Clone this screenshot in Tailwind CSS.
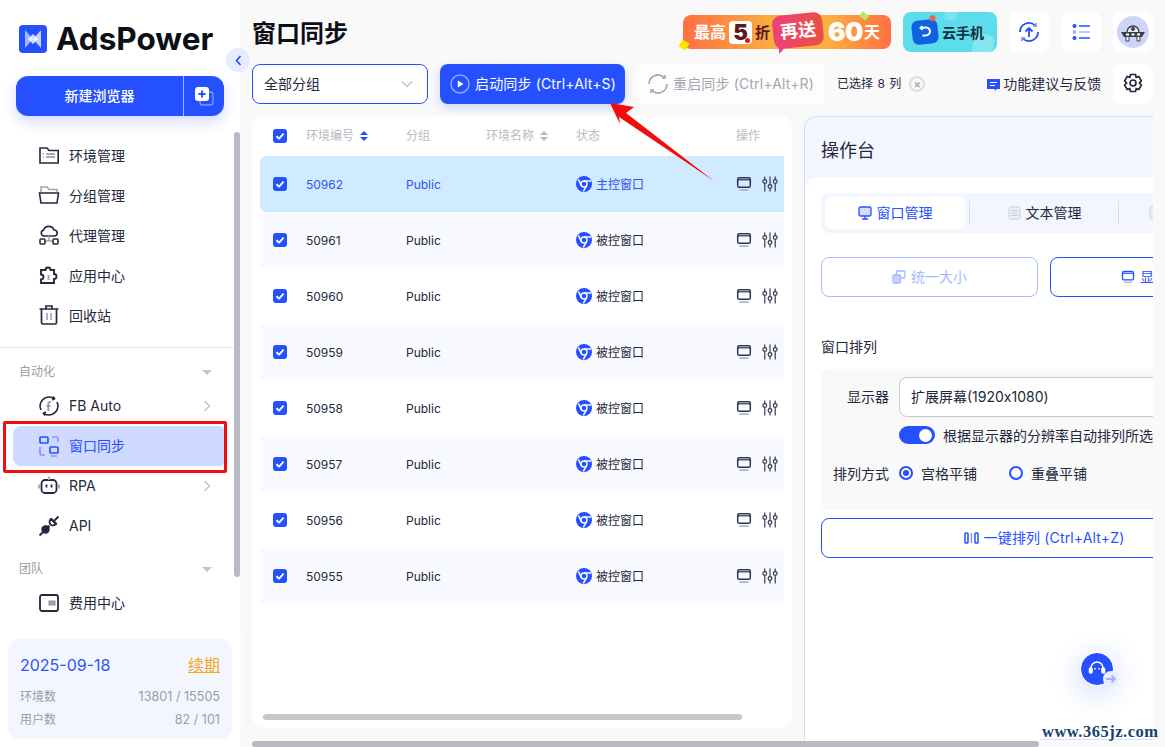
<!DOCTYPE html>
<html lang="zh-CN">
  <head>
    <meta charset="UTF-8" />
    <title>AdsPower</title>
    <script src="https://cdn.jsdelivr.net/npm/@tailwindcss/browser@4"></script>
  </head>
  <body class="relative flex w-[1165px] h-[747px] overflow-hidden bg-[#f9f9fa] text-[#23283d] text-[14px] font-['Inter','Noto_Sans_CJK_SC',sans-serif]">
    <svg class="hidden">
      <symbol id="chrome" viewBox="0 0 24 24">
        <circle cx="12" cy="12" r="12" fill="#2450ff" />
        <circle cx="12" cy="12" r="4.500" fill="none" stroke="#fff" stroke-width="2" />
        <path d="M22.500 7.500H12M3.500 5 8.300 14.800M11 23l5.200-9" stroke="#fff" stroke-width="2.200" fill="none" />
      </symbol>
      <symbol id="win" viewBox="0 0 16 16">
        <rect x="1.700" y="1.700" width="12.600" height="9.600" rx="1.600" fill="none" stroke="#2d3350" stroke-width="1.500" />
        <path d="M2 3.800h12" stroke="#2d3350" stroke-width="1.200" />
        <path d="M3.500 14h9" stroke="#a9aec2" stroke-width="1.600" />
      </symbol>
      <symbol id="sliders" viewBox="0 0 16 16">
        <g fill="none" stroke="#2d3350" stroke-width="1.150">
          <circle cx="2.800" cy="5.500" r="1.900" /><circle cx="8" cy="10.500" r="1.900" /><circle cx="13.200" cy="5.500" r="1.900" />
          <path d="M2.800 .5v3M2.800 7.400V15.500M8 .5v8M8 12.400v3.100M13.200 .5v3M13.200 7.400V15.500" />
        </g>
      </symbol>
      <symbol id="check" viewBox="0 0 14 14">
        <rect width="14" height="14" rx="3" fill="#2450ff" />
        <path d="M3.400 7.200 6 9.600l4.600-5" fill="none" stroke="#fff" stroke-width="1.900" />
      </symbol>
      <symbol id="chev" viewBox="0 0 8 12">
        <path d="M1.500 1 6.500 6l-5 5" fill="none" stroke="#c3c5cc" stroke-width="1.500" />
      </symbol>
      <symbol id="sort" viewBox="0 0 8 10">
        <path d="M4 0 8 4H0zM4 10 0 6h8z" />
      </symbol>
    </svg>

    <!-- 侧边栏 -->
    <aside class="relative flex flex-col w-[240px] h-full shrink-0 bg-white">
      <div class="flex items-center h-[76px] pl-[19px] pt-[1px] gap-[9px]">
        <svg class="w-[28px] h-[28px]" viewBox="0 0 28 28">
          <rect width="28" height="28" rx="4" fill="#2450ff" />
          <path d="M6 5l8 9-8 9z" fill="#9db4ff" />
          <path d="M22 5l-8 9 8 9z" fill="#c4d2ff" />
          <path d="M14 9l5 5-5 5-5-5z" fill="#fff" opacity=".8" />
        </svg>
        <span class="text-[31.500px] leading-none font-bold text-[#0d0f16]">AdsPower</span>
      </div>
      <div class="flex mx-[16px] h-[40px] rounded-xl bg-[#2450ff] text-white text-[14px] font-medium shadow-[0_6px_14px_rgba(36,80,255,0.2)]">
        <div class="flex items-center justify-center w-[168px] pb-[2px] border-r border-white/60">新建浏览器</div>
        <div class="flex flex-1 items-center justify-center">
          <svg class="w-[20px] h-[20px]" viewBox="0 0 20 20">
            <rect x="6" y="6" width="13" height="13" rx="2.500" fill="none" stroke="#7f9bff" stroke-width="1.300" />
            <rect x="1" y="1" width="14" height="14" rx="3" fill="#fff" />
            <path d="M8 4.500v7M4.500 8h7" stroke="#2450ff" stroke-width="1.900" />
          </svg>
        </div>
      </div>

      <nav class="flex flex-col mt-[19px]">
        <a class="flex items-center h-[40px] pl-[38px] gap-[9px]">
          <svg class="w-[22px] h-[22px]" viewBox="0 0 22 22" fill="none" stroke="#23283d" stroke-width="1.600"><path d="M2 4h7l2 2.500h9.200V19H2z" /><path d="M8 10h9M8 13h9M5 10h1M5 13h1" stroke="#8b8fa3" /></svg>
          <span>环境管理</span>
        </a>
        <a class="flex items-center h-[40px] pl-[38px] gap-[9px]">
          <svg class="w-[22px] h-[22px]" viewBox="0 0 22 22" fill="none" stroke-width="1.600"><path d="M3 8V3h6l2 2.500h8V8" stroke="#a4a7b5" /><path d="M1.500 9h19l-1.500 10H3z" stroke="#23283d" /></svg>
          <span>分组管理</span>
        </a>
        <a class="flex items-center h-[40px] pl-[38px] gap-[9px]">
          <svg class="w-[22px] h-[22px]" viewBox="0 0 22 22" fill="none" stroke="#23283d" stroke-width="1.600"><path d="M6 12a3 3 0 0 1-.4-5.900A5.500 5.500 0 0 1 16 6a3 3 0 0 1 .2 6z" /><path d="M11 12v5M7 17h8" stroke="#a4a7b5" /><rect x="2" y="15" width="5" height="5" rx="1" /><rect x="15" y="15" width="5" height="5" rx="1" /></svg>
          <span>代理管理</span>
        </a>
        <a class="flex items-center h-[40px] pl-[38px] gap-[9px]">
          <svg class="w-[22px] h-[22px]" viewBox="0 0 22 22" fill="none" stroke="#23283d" stroke-width="1.900"><path d="M3 6h4.500a2.500 2.500 0 1 1 5 0H16v4a2.500 2.500 0 1 1 0 5v4H3v-3.500a2.500 2.500 0 1 0 0-5z" /><path d="M10.500 11v5" stroke="#a4a7b5" /></svg>
          <span>应用中心</span>
        </a>
        <a class="flex items-center h-[40px] pl-[38px] gap-[9px]">
          <svg class="w-[22px] h-[22px]" viewBox="0 0 22 22" fill="none" stroke="#23283d" stroke-width="1.700"><path d="M1.500 5h19M8 4.500V2h6v2.500M3.500 5v13.500A1.500 1.500 0 0 0 5 20h12a1.500 1.500 0 0 0 1.500-1.500V5" /><path d="M9 9v7M13 9v7" stroke="#a4a7b5" /></svg>
          <span>回收站</span>
        </a>
      </nav>

      <div class="mt-[12px] h-px bg-[#e8e9ee]"></div>

      <div class="flex items-center justify-between h-[48px] pl-[19px] pr-[28px] text-[12px] text-[#9a9ca6]">
        <span>自动化</span>
        <span class="w-0 h-0 border-x-[5px] border-t-[5px] border-x-transparent border-t-[#c3c5cc]"></span>
      </div>
      <nav class="flex flex-col -mt-[10px]">
        <a class="flex items-center h-[40px] pl-[38px] pr-[29px] gap-[9px]">
          <svg class="w-[22px] h-[22px]" viewBox="0 0 22 22" fill="none" stroke="#23283d" stroke-width="1.700"><path d="M3 15A9 9 0 0 1 16 3.500M19 7a9 9 0 0 1-13 11.500" /><path d="M15 1.500l1.500 2.300-2.300 1.200M7 20.500l-1.500-2.300 2.300-1.200" /><path d="M13 7h-1.200a1.500 1.500 0 0 0-1.500 1.500V16M8.500 11h4" stroke="#8b8fa3" /></svg>
          <span class="flex-1 pb-[2px]">FB Auto</span>
          <svg class="w-[8px] h-[12px]"><use href="#chev" /></svg>
        </a>
        <a class="flex items-center h-[40px] mx-[13px] pl-[25px] gap-[9px] rounded-lg bg-[#d0d9fe] text-[#2450ff]">
          <svg class="w-[22px] h-[22px]" viewBox="0 0 22 22" fill="none" stroke="#2450ff" stroke-width="1.700"><rect x="2" y="2" width="8" height="6" rx="1" /><rect x="12" y="12" width="8" height="6" rx="1" /><path d="M14 2h4a2 2 0 0 1 2 2v3M2 12v6a2 2 0 0 0 2 2h3M13 21h6" stroke="#7f9bff" /></svg>
          <span class="pb-[2px]">窗口同步</span>
        </a>
        <a class="flex items-center h-[40px] pl-[38px] pr-[29px] gap-[9px]">
          <svg class="w-[22px] h-[22px]" viewBox="0 0 22 22" fill="none" stroke="#23283d" stroke-width="1.800"><rect x="3.500" y="5" width="15" height="13" rx="3.500" /><path d="M8.500 9.500v3M13.500 9.500v3" /><path d="M11 1.500V5M1 9.500v4M21 9.500v4" stroke="#a4a7b5" /></svg>
          <span class="flex-1 pb-[2px]">RPA</span>
          <svg class="w-[8px] h-[12px]"><use href="#chev" /></svg>
        </a>
        <a class="flex items-center h-[40px] pl-[38px] gap-[9px]">
          <svg class="w-[22px] h-[22px]" viewBox="0 0 22 22" fill="none" stroke="#23283d" stroke-width="1.800"><path d="M1.500 20.500l4-4M16.500 5.500l4-4M13 3.500l5.500 5.500" /><circle cx="7.500" cy="14.500" r="3.300" fill="#23283d" /><path d="M13 4a4.500 4.500 0 0 0-1 5l1 1a4.500 4.500 0 0 0 5-1z" /><path d="M9.500 10.500l2 2" /></svg>
          <span class="pb-[2px]">API</span>
        </a>
      </nav>
      <div class="flex items-center justify-between h-[46px] pl-[19px] pr-[28px] text-[12px] text-[#9a9ca6]">
        <span>团队</span>
        <span class="w-0 h-0 border-x-[5px] border-t-[5px] border-x-transparent border-t-[#c3c5cc]"></span>
      </div>
      <a class="flex items-center h-[30px] pl-[38px] -mt-[4px] gap-[9px]">
        <svg class="w-[22px] h-[22px]" viewBox="0 0 22 22" fill="none" stroke="#23283d" stroke-width="1.800"><rect x="2" y="3" width="18" height="16" rx="2" /><rect x="11" y="9" width="6" height="4" fill="#a4a7b5" stroke="#8b8fa3" stroke-width="1" /></svg>
        <span class="pb-[2px]">费用中心</span>
      </a>

      <div class="absolute left-0 bottom-0 w-[240px] h-[116px] pt-[8px] px-[8px] bg-white shadow-[0_-8px_10px_rgba(255,255,255,0.9)]">
        <div class="h-[100px] px-[12px] pt-[15px] rounded-xl bg-[#f3f6ff] text-[12px] text-[#9a9ca6]">
          <div class="flex justify-between items-center h-[22px] text-[16px]">
            <span class="text-[#2f55f5]">2025-09-18</span>
            <span class="underline text-[#f5a623]">续期</span>
          </div>
          <div class="flex justify-between mt-[12px]"><span>环境数</span><span class="text-[12.600px]">13801 / 15505</span></div>
          <div class="flex justify-between mt-[4px]"><span>用户数</span><span class="text-[12.600px]">82 / 101</span></div>
        </div>
      </div>

      <!-- 侧边栏滚动条、折叠按钮、红框 -->
      <div class="absolute left-[234px] top-[132px] w-[6px] h-[445px] rounded-full bg-[#b9bac3]"></div>
      <div class="absolute left-[226px] top-[48px] flex items-center justify-center w-[24px] h-[24px] rounded-full bg-[#e6ebff] z-10">
        <svg class="w-[7px] h-[11px]" viewBox="0 0 7 11"><path d="M5.500 1 1.500 5.500l4 4.500" fill="none" stroke="#2450ff" stroke-width="1.600" /></svg>
      </div>
      <div class="absolute left-[3px] top-[421px] w-[224px] h-[52px] border-[3px] border-[#f00f0f] rounded-[2px]"></div>
    </aside>

    <!-- 主体 -->
    <main class="flex flex-col flex-1 min-w-0 pl-[12px] pr-[12px]">
      <header class="flex items-center h-[64px]">
        <h1 class="flex-1 text-[24px] leading-none font-bold text-[#0d0f16] mt-[3px]">窗口同步</h1>
        <div class="relative flex items-center w-[208px] h-[34px] rounded-lg bg-[linear-gradient(90deg,#ff7043,#f9b03f_45%,#fbb040_70%,#ff6f42)] text-white font-bold pl-[11px] mr-[12px]">
          <span class="text-[16px] leading-none">最高</span>
          <span class="relative flex items-center justify-center w-[23px] h-[23px] ml-[3px] rounded bg-white text-[#5a1b1b] text-[22px] leading-none font-black">5<span class="absolute right-[2px] bottom-[1px] w-[5px] h-[5px] rounded-full bg-[#f00f0f]"></span></span>
          <span class="ml-[3px] text-[15px] leading-none text-[#5a1b1b]">折</span>
          <span class="relative flex items-center justify-center w-[50px] h-[33px] ml-[3px] -mt-[4px] rounded-lg bg-[linear-gradient(100deg,#ee3f7a,#ea5040)] text-[18px] leading-none -rotate-6">再送<span class="absolute left-[4px] -bottom-[5px] w-0 h-0 border-r-[8px] border-b-[8px] border-r-transparent border-b-[#ee3f7a] -scale-y-100"></span></span>
          <span class="ml-[5px] text-[26px] leading-none font-black tracking-[-0.5px]">60</span>
          <span class="ml-[1px] text-[16px] leading-none">天</span>
          <span class="absolute -left-[3px] bottom-[0px] w-[8px] h-[8px] bg-[#ffe600] rotate-[30deg]"></span>
          <span class="absolute left-[177px] -top-[2px] w-[8px] h-[6px] bg-[#b5ea5c] rotate-[40deg]"></span>
        </div>
        <div class="relative flex items-center gap-[4px] w-[94px] h-[40px] pl-[9px] rounded-lg overflow-hidden bg-[#5ddcec] text-[14px] font-bold text-[#12303d]">
          <span class="absolute left-[42px] -top-[6px] w-[12px] h-[14px] rounded-sm bg-white/20 rotate-12"></span>
          <span class="absolute left-[70px] top-[22px] w-[20px] h-[24px] rounded-md bg-white/25 rotate-12"></span>
          <span class="relative flex items-center justify-center w-[26px] h-[24px] rounded-md bg-[#0f62e0] -rotate-6">
            <svg class="w-[14px] h-[14px]" viewBox="0 0 14 14" fill="none" stroke="#fff" stroke-width="2"><path d="M3 2.500h5a4 4 0 0 1 0 8H4M5 1 3 2.500 5 4.500" /></svg>
            <span class="absolute -top-[4px] right-[1px] w-[6px] h-[6px] rounded-full bg-[#f5604a]"></span>
          </span>
          <span class="relative">云手机</span>
        </div>
        <div class="flex items-center justify-center w-[40px] h-[40px] ml-[12px] rounded-lg bg-white">
          <svg class="w-[22px] h-[22px]" viewBox="0 0 22 22" fill="none" stroke="#2450ff" stroke-width="1.800"><path d="M2 11A9 9 0 0 1 17 4.300M20 11a9 9 0 0 1-15 6.700" /><path d="M15 5h3V2M7 17H4v3" stroke="#7f9bff" /><path d="M11 16V7M7.500 10.500 11 7l3.500 3.500" /></svg>
        </div>
        <div class="flex items-center justify-center w-[40px] h-[40px] ml-[12px] rounded-lg bg-white">
          <svg class="w-[18px] h-[18px]" viewBox="0 0 18 18" fill="none" stroke-width="1.600"><circle cx="2.500" cy="3" r="2" fill="#2450ff" /><circle cx="2.500" cy="9" r="2" fill="#a9b9ff" /><circle cx="2.500" cy="15" r="2" fill="#2450ff" /><path d="M7 3h11M7 15h11" stroke="#2450ff" /><path d="M7 9h11" stroke="#a9b9ff" /></svg>
        </div>
        <div class="flex items-center justify-center w-[40px] h-[40px] ml-[12px] rounded-lg bg-white">
          <span class="flex items-center justify-center w-[32px] h-[32px] rounded-full bg-[#cdd6f8]">
            <svg class="w-[26px] h-[22px]" viewBox="0 0 26 22"><path d="M7 11a6 6 0 0 1 12 0" fill="#e8ebf7" stroke="#3b3d4a" stroke-width="1.400" /><circle cx="13" cy="8" r="2" fill="#3b3d4a" /><path d="M1 11h24l-3 5H4z" fill="#3b3d4a" /><path d="M6 12.500h3v2H6zM11.500 12.500h3v2h-3zM17 12.500h3v2h-3z" fill="#fff" /><path d="M6 16v4h3v-4M17 16v4h3v-4" fill="#fff" stroke="#3b3d4a" /></svg>
          </span>
        </div>
      </header>

      <div class="flex items-center h-[40px]">
        <div class="flex items-center justify-between w-[176px] h-full pl-[11px] pr-[14px] rounded-lg border border-[#2450ff] bg-white">
          <span class="pb-[2px]">全部分组</span>
          <svg class="w-[12px] h-[8px]" viewBox="0 0 12 8"><path d="M1 1.500 6 6.500l5-5" fill="none" stroke="#c3c5cc" stroke-width="1.500" /></svg>
        </div>
        <button class="flex items-center w-[185px] h-full ml-[12px] pl-[10px] gap-[5px] rounded-lg bg-[#2450ff] text-white tracking-[0.150px] whitespace-nowrap shadow-[0_4px_10px_rgba(36,80,255,0.2)]">
          <svg class="w-[20px] h-[20px] shrink-0" viewBox="0 0 20 20"><circle cx="10" cy="10" r="9" fill="none" stroke="#8ea6ff" stroke-width="1.500" /><path d="M7.800 6.500 13.500 10l-5.700 3.500z" fill="#fff" /></svg>
          <span class="pb-[2px]">启动同步 (Ctrl+Alt+S)</span>
        </button>
        <button class="flex items-center w-[188px] h-full ml-[12px] pl-[10px] gap-[4px] rounded-lg bg-white/70 text-[#a4a6b0] tracking-[0.150px] whitespace-nowrap">
          <svg class="w-[22px] h-[22px] shrink-0" viewBox="0 0 22 22" fill="none" stroke="#a4a6b0" stroke-width="1.600"><path d="M2 11A9 9 0 0 1 17 4.300M20 11a9 9 0 0 1-15 6.700" /><path d="M15 5h3V2M7 17H4v3" /></svg>
          <span class="pb-[2px]">重启同步 (Ctrl+Alt+R)</span>
        </button>
        <span class="ml-[12px] text-[12px] [word-spacing:1px] whitespace-nowrap">已选择 8 列</span>
        <span class="flex items-center justify-center w-[16px] h-[16px] ml-[8px] rounded-full border-2 border-[#dcdde2] text-[#a9abb5] text-[11px] font-bold leading-none">×</span>
        <svg class="w-[13px] h-[13px] ml-[62px] shrink-0" viewBox="0 0 13 13"><path d="M0 1h13v10H9.500l-1 1.500L7 11H0z" fill="#2450ff" /><path d="M3 4.500h7M3 7.500h5" stroke="#fff" /></svg>
        <span class="ml-[3px] pb-[2px] whitespace-nowrap">功能建议与反馈</span>
        <div class="flex items-center justify-center w-[40px] h-[40px] ml-auto rounded-lg bg-white shrink-0">
          <svg class="w-[22px] h-[22px]" viewBox="0 0 22 22" fill="none" stroke="#23283d" stroke-width="1.700"><path d="M8.500 1.500h5l.7 2.800 2.600-.8 2.600 4.300-2 2.200 2 2.200-2.600 4.300-2.600-.8-.7 2.800h-5l-.7-2.800-2.600.8-2.600-4.300 2-2.200-2-2.200 2.600-4.300 2.600.8z" /><circle cx="11" cy="10" r="3" /></svg>
        </div>
      </div>

      <div class="flex flex-1 min-h-0 gap-[12px] mt-[12px]">
        <!-- 表格 -->
        <section class="relative w-[540px] h-[612px] shrink-0 px-[8px] rounded-xl bg-white">
          <div class="flex items-center h-[40px] text-[12px] text-[#b9bbc3]">
            <svg class="w-[14px] h-[14px] ml-[13px]"><use href="#check" /></svg>
            <span class="ml-[19px] w-[100px] flex items-center gap-[6px]">环境编号<svg class="w-[8px] h-[10px] fill-[#2450ff]"><use href="#sort" /></svg></span>
            <span class="w-[80px]">分组</span>
            <span class="w-[90px] flex items-center gap-[6px]">环境名称<svg class="w-[8px] h-[10px] fill-[#b9bbc3]"><use href="#sort" /></svg></span>
            <span class="w-[160px]">状态</span>
            <span>操作</span>
          </div>
          <div id="rows"></div>
          <div class="absolute left-[11px] top-[598px] w-[479px] h-[6px] rounded-full bg-[#c6c7cd]"></div>
        </section>

        <!-- 操作台 -->
        <section class="flex flex-col w-[349px] h-[625px] shrink-0 overflow-hidden rounded-tl-xl border-l border-t border-[#cfdcff] bg-[#f3f6ff]">
          <div class="flex items-center h-[60px] pl-[16px] pt-[7px] text-[18px] leading-none shrink-0">操作台</div>
          <div class="flex-1 pl-[16px] pt-[16px] rounded-tl-xl bg-white">
            <div class="flex items-center w-[340px] h-[40px] pl-[4px] rounded-lg bg-[#f3f6ff]">
              <div class="flex items-center justify-center gap-[5px] w-[140px] h-[32px] pb-[1px] rounded-md bg-white text-[#2450ff] shrink-0">
                <svg class="w-[14px] h-[14px]" viewBox="0 0 14 14"><rect x="1" y="1" width="12" height="9" rx="1.500" fill="#d4dcff" stroke="#2450ff" stroke-width="1.300" /><path d="M7 10v2.500M4 13h6" stroke="#2450ff" stroke-width="1.300" /></svg>
                <span>窗口管理</span>
              </div>
              <div class="w-px h-[24px] ml-[4px] bg-[#d4dcf5] shrink-0"></div>
              <div class="flex items-center justify-center gap-[5px] w-[148px] pb-[1px] pl-[1px] shrink-0">
                <svg class="w-[13px] h-[14px]" viewBox="0 0 13 14"><rect x="1" y="1" width="11" height="12" rx="1.500" fill="#eceef2" stroke="#c9ccd4" /><path d="M3.500 4.500h6M3.500 7h6M3.500 9.500h6" stroke="#c9ccd4" /></svg>
                <span>文本管理</span>
              </div>
              <div class="w-px h-[24px] bg-[#d4dcf5] shrink-0"></div>
              <svg class="w-[13px] h-[14px] ml-[30px] shrink-0" viewBox="0 0 13 14"><rect x="1" y="1" width="11" height="12" rx="1.500" fill="#eceef2" stroke="#c9ccd4" /></svg>
            </div>

            <div class="flex gap-[12px] w-[500px] mt-[24px]">
              <div class="flex items-center justify-center gap-[5px] w-[217px] h-[40px] pb-[1px] rounded-lg border border-[#a7baff] text-[#a7baff]">
                <svg class="w-[14px] h-[14px]" viewBox="0 0 14 14" fill="none" stroke="#a7baff" stroke-width="1.300"><rect x="4.500" y="1" width="8.500" height="7" rx="1" /><rect x="1" y="5" width="7.500" height="8" rx="1" fill="#c5d2ff" /></svg>
                <span>统一大小</span>
              </div>
              <div class="flex items-center justify-center gap-[5px] w-[217px] h-[40px] pb-[1px] rounded-lg border border-[#2450ff] text-[#2450ff]">
                <svg class="w-[14px] h-[14px]" viewBox="0 0 16 16"><rect x="1.700" y="1.700" width="12.600" height="9.600" rx="1.600" fill="none" stroke="#2450ff" stroke-width="1.500" /><path d="M2 3.800h12" stroke="#2450ff" stroke-width="1.200" /><path d="M3.500 14h9" stroke="#a7baff" stroke-width="1.600" /></svg>
                <span>显示窗口</span>
              </div>
            </div>

            <div class="mt-[41px] leading-[18px]">窗口排列</div>
            <div class="w-[500px] h-[141px] mt-[13px] pt-[8px] rounded-lg bg-[#f9f9f9]">
              <div class="flex items-center h-[40px]">
                <span class="w-[68px] text-right pb-[2px]">显示器</span>
                <div class="flex items-center w-[400px] h-full ml-[10px] pl-[11px] pb-[2px] rounded-lg border border-[#c6c7cf] bg-white">扩展屏幕(1920x1080)</div>
              </div>
              <div class="flex items-center h-[18px] mt-[9px] pl-[78px] whitespace-nowrap">
                <span class="flex items-center justify-end w-[36px] h-[18px] pr-[3px] rounded-full bg-[#2450ff]"><span class="w-[13px] h-[13px] rounded-full bg-white"></span></span>
                <span class="ml-[8px]">根据显示器的分辨率自动排列所选</span>
              </div>
              <div class="flex items-center h-[20px] mt-[19px]">
                <span class="w-[68px] text-right">排列方式</span>
                <span class="flex items-center justify-center w-[14px] h-[14px] ml-[10px] rounded-full border-2 border-[#2450ff]"><span class="w-[6px] h-[6px] rounded-full bg-[#2450ff]"></span></span>
                <span class="ml-[8px]">宫格平铺</span>
                <span class="w-[14px] h-[14px] ml-[32px] rounded-full border-2 border-[#2450ff]"></span>
                <span class="ml-[8px]">重叠平铺</span>
              </div>
            </div>
            <div class="flex items-center justify-center gap-[5px] w-[446px] h-[40px] mt-[8px] rounded-lg border border-[#2450ff] text-[#2450ff] tracking-[0.150px]">
              <svg class="w-[15px] h-[12px]" viewBox="0 0 15 12" fill="none" stroke="#2450ff" stroke-width="1.500"><rect x="1" y="1" width="3" height="10" rx=".8" /><path d="M7.500 1v10" stroke="#7f9bff" /><rect x="11" y="1" width="3" height="10" rx=".8" /></svg>
              <span class="pb-[2px]">一键排列 (Ctrl+Alt+Z)</span>
            </div>
          </div>
        </section>
      </div>
    </main>

    <!-- 悬浮层：客服按钮、底部滚动条、箭头标注、水印 -->
    <div class="absolute left-[1081px] top-[653px] flex items-center justify-center w-[32px] h-[32px] rounded-full bg-[#2450ff] shadow-[0_6px_30px_rgba(36,80,255,0.3)] outline outline-1 outline-white">
      <svg class="w-[18px] h-[18px]" viewBox="0 0 18 18" fill="none" stroke="#fff" stroke-width="1.600"><path d="M3 11V8a6 6 0 0 1 12 0v3" /><rect x="1.500" y="8" width="2.500" height="5" rx="1" fill="#fff" /><rect x="14" y="8" width="2.500" height="5" rx="1" fill="#fff" /><path d="M7 8v1.500M11 8v1.500" /></svg>
      <span class="absolute left-[22px] top-[18px] flex items-center justify-center w-[16px] h-[16px] rounded-full bg-[#e9eeff]">
        <svg class="w-[10px] h-[10px]" viewBox="0 0 10 10" fill="none" stroke="#9db4ff" stroke-width="1.800"><path d="M0 5h9M5.500 1.500 9 5 5.500 8.500" /></svg>
      </span>
    </div>
    <div class="absolute left-[252px] top-[741px] w-[787px] h-[6px] rounded-full bg-[#b9bac3]"></div>
    <div class="absolute left-[1040px] top-[739px] w-[113px] h-px bg-[#cfdcff]"></div>
    <svg class="absolute left-0 top-0 pointer-events-none" width="1165" height="747">
      <polygon points="610,103 634,107 626,113 714,181 619,117 620,124" fill="#f40b0b" />
    </svg>
    <div class="absolute left-[1042px] top-[722px] text-[16.500px] leading-[20px] font-bold text-[#17406f] font-['Liberation_Serif',serif] tracking-[0.500px]">www.365jz.com</div>

    <script>
      const ids = [50962, 50961, 50960, 50959, 50958, 50957, 50956, 50955];
      const rows = document.getElementById("rows");
      ids.forEach((id, i) => {
        const master = i === 0;
        const bg = master ? "bg-[#d0eaff] rounded-l-md" : i % 2 === 1 ? "bg-[#f9faff]" : "bg-white";
        const text = master ? "text-[#2f55f5]" : "";
        const el = document.createElement("div");
        el.className = `flex items-center h-[56px] pt-[2px] text-[12px] ${bg}`;
        el.innerHTML = `
          <svg class="w-[14px] h-[14px] ml-[13px] -mt-[2px]"><use href="#check" /></svg>
          <span class="ml-[19px] w-[100px] ${text}">${id}</span>
          <span class="w-[170px] ${text}">Public</span>
          <span class="flex items-center gap-[4px] w-[160px] ${text}">
            <svg class="w-[16px] h-[16px] -mt-[2px]"><use href="#chrome" /></svg>${master ? "主控窗口" : "被控窗口"}
          </span>
          <svg class="w-[16px] h-[16px] -mt-[2px]"><use href="#win" /></svg>
          <svg class="w-[16px] h-[16px] ml-[10px] -mt-[2px]"><use href="#sliders" /></svg>
        `;
        rows.appendChild(el);
      });
    </script>
  </body>
</html>
